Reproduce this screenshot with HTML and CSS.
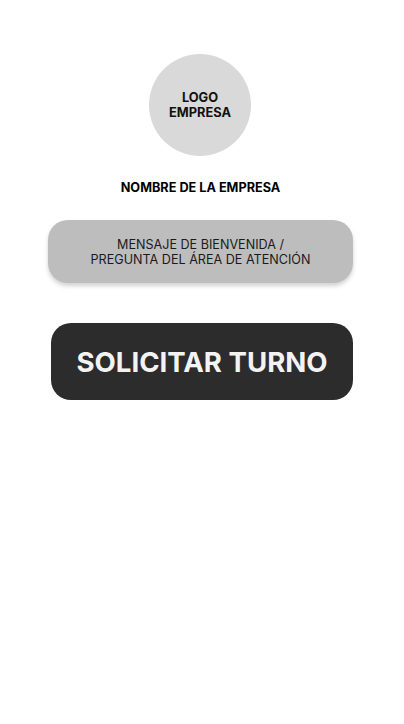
FILE: index.html
```html
<!DOCTYPE html>
<html lang="es">
<head>
<meta charset="utf-8">
<link rel="stylesheet" href="styles.css">
</head>
<body>
<main class="screen">
  <div class="logo">LOGO<br>EMPRESA</div>
  <h1 class="company">NOMBRE DE LA EMPRESA</h1>
  <div class="message">MENSAJE DE BIENVENIDA /<br>PREGUNTA DEL ÁREA DE ATENCIÓN</div>
  <button class="cta">SOLICITAR TURNO</button>
</main>
</body>
</html>
```
FILE: styles.css
```css
html, body {
  margin: 0;
  padding: 0;
  background: #ffffff;
}
body {
  font-family: Inter, "Noto Sans", sans-serif;
  color: #000;
}
.screen {
  display: flex;
  flex-direction: column;
  align-items: center;
  padding-top: 54px;
}
.logo {
  margin-left: -4px;
  width: 102px;
  height: 102px;
  border-radius: 50%;
  background: #d9d9d9;
  display: flex;
  align-items: center;
  justify-content: center;
  text-align: center;
  font-weight: 700;
  font-size: 12.8px;
  line-height: 15px;
  color: #111;
}
.company {
  margin: 24px 0 0 -3px;
  font-size: 12.7px;
  line-height: 16px;
  font-weight: 700;
}
.message {
  margin-top: 24px;
  margin-left: -3px;
  width: 305px;
  height: 63px;
  box-sizing: border-box;
  border-radius: 20px;
  background: #bdbdbd;
  box-shadow: 0 3px 4px rgba(0,0,0,0.18);
  display: flex;
  align-items: center;
  justify-content: center;
  text-align: center;
  font-size: 12.6px;
  line-height: 15px;
  color: #1a1a1a;
}
.cta {
  margin-top: 40px;
  width: 302px;
  height: 77px;
  border: none;
  border-radius: 20px;
  background: #2c2c2c;
  color: #f3f3f3;
  font-family: Inter, "Noto Sans", sans-serif;
  font-weight: 700;
  font-size: 27.6px;
  padding: 0;
}
```
